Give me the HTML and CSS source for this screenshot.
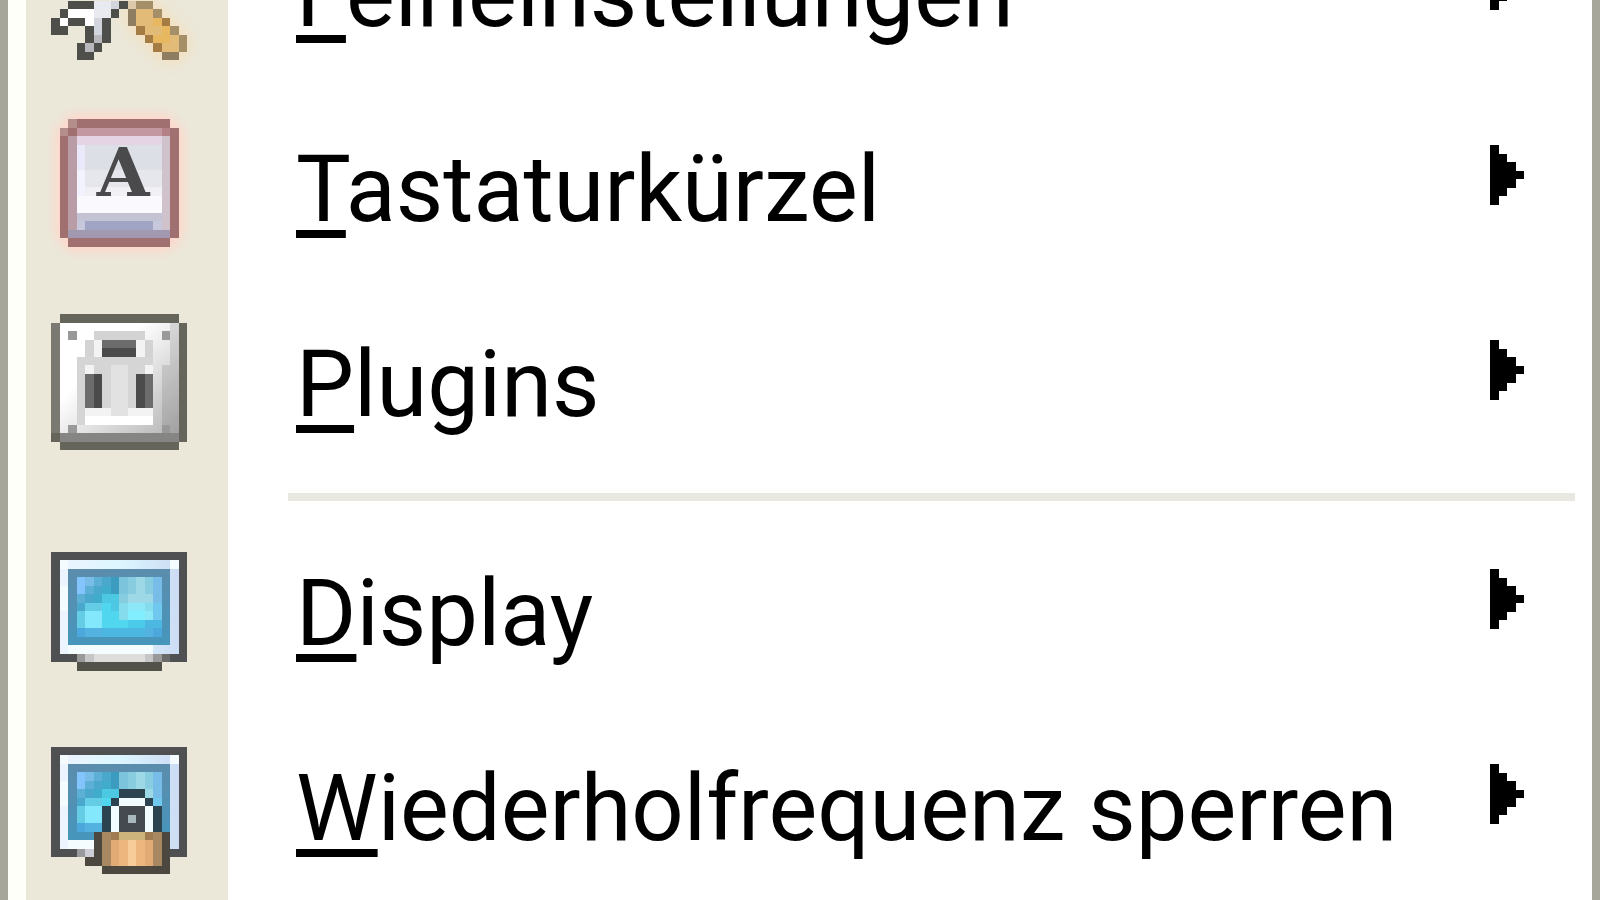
FILE: index.html
```html
<!DOCTYPE html>
<html lang="de">
<head>
  <meta charset="UTF-8">
  <meta name="viewport" content="width=device-width, initial-scale=1.0">
  <title>Menü</title>
  <link rel="stylesheet" href="styles.css">
</head>
<body>
  <!-- shared drawings -->
  <svg class="defs" width="0" height="0" aria-hidden="true">
    <defs>
      <linearGradient id="plate" x1="0" y1="0" x2="1" y2="1">
        <stop offset="0.35" stop-color="#fff"/>
        <stop offset="1" stop-color="#b4b4b4"/>
      </linearGradient>
      <linearGradient id="bezel" x1="0" y1="0" x2="1" y2="0">
        <stop offset="0" stop-color="#eef4ff"/>
        <stop offset="0.5" stop-color="#dcf6ff"/>
        <stop offset="1" stop-color="#ccdcf4"/>
      </linearGradient>
      <linearGradient id="rim" x1="0" y1="0" x2="0" y2="1">
        <stop offset="0" stop-color="#5c8cac"/>
        <stop offset="1" stop-color="#4696bc"/>
      </linearGradient>
    </defs>
    <symbol id="arrow" viewBox="0 0 4 7">
      <path d="M0 0h1v1h1v1h1v1h1v1h-1v1h-1v1h-1v1h-1z"/>
    </symbol>
    <symbol id="monitor" viewBox="0 0 16 16">
      <path fill="#4e5052" d="M0 1h16v13h-16z"/>
      <path fill="url(#bezel)" d="M1 2h14v11h-14z"/>
      <path fill="#f4fcff" d="M1 2h1v1h-1zM14 2h1v1h-1zM1 5h1v3h-1zM2 12h10v1h-10z"/>
      <path fill="url(#rim)" d="M2 3h12v9h-12z"/>
      <path fill="#48b8dc" d="M3 4h10v7h-10z"/>
      <path stroke="#84c4fc" d="M3 4.5h1M3 5.5h1"/>
      <path stroke="#78bce8" d="M4 4.5h1M12 4.5h1M12 5.5h1M12 6.5h1"/>
      <path stroke="#5cb0d6" d="M5 4.5h1M4 5.5h1M3 6.5h1"/>
      <path stroke="#4aa8cc" d="M6 4.5h1M5 5.5h1M4 6.5h1M3 7.5h2"/>
      <path stroke="#3c9cc0" d="M7 4.5h1M7 5.5h1"/>
      <path stroke="#40accc" d="M6 5.5h1M5 6.5h1"/>
      <path stroke="#7cc4dc" d="M8 4.5h1M8 5.5h1"/>
      <path stroke="#88cce0" d="M9 4.5h1M11 4.5h1M9 5.5h1M11 5.5h1M8 6.5h1"/>
      <path stroke="#9cd8e6" d="M10 4.5h1M10 5.5h1M9 6.5h3"/>
      <path stroke="#84dcec" d="M8 7.5h1M11 7.5h1M8 8.5h1"/>
      <path stroke="#8ce8f6" d="M9 7.5h2M11 8.5h1"/>
      <path stroke="#80eefe" d="M9 8.5h2"/>
      <path stroke="#70c8ee" d="M12 7.5h1M12 8.5h1"/>
      <path stroke="#4cc8e2" d="M6 6.5h2M5 7.5h1M7 7.5h1"/>
      <path stroke="#64cce4" d="M4 7.5h2M3 8.5h1M3 9.5h1"/>
      <path stroke="#84e8fc" d="M4 8.5h2M4 9.5h2"/>
      <path stroke="#50d6ee" d="M6 7.5h1M6 8.5h2M6 9.5h3"/>
      <path stroke="#4ccaea" d="M9 9.5h2"/>
      <path stroke="#4cb8e2" d="M11 9.5h2M6 10.5h5"/>
      <path stroke="#4ca8dc" d="M3 10.5h1M12 10.5h1"/>
      <path stroke="#54b2e0" d="M4 10.5h2M11 10.5h1"/>
    </symbol>
  </svg>

  <ul class="menu" role="menu">
    <li role="none">
      <button class="item" type="button" role="menuitem" aria-haspopup="true">
        <svg class="icon" viewBox="0 0 16 16" aria-hidden="true">
          <g class="glow-tan">
            <path stroke="#dcc9ac" d="M9 9.5h1"/>
            <path stroke="#a48f69" d="M10 9.5h2M12 10.5h1M14 12.5h1M15 13.5h1M15 14.5h1"/>
            <path stroke="#8e7d60" d="M9 10.5h1M9 11.5h1M13 15.5h2"/>
            <path stroke="#e2bb78" d="M10 10.5h2M10 11.5h2M11 12.5h2M14 13.5h1M13 14.5h2"/>
            <path stroke="#e8b860" d="M12 11.5h1M13 12.5h1M12 13.5h2"/>
            <path stroke="#a47c44" d="M13 11.5h1M10 12.5h1M11 13.5h1M12 14.5h1"/>
          </g>
          <path stroke="#4e4e4a" d="M2 9.5h3M8 9.5h1M1 10.5h1M7 10.5h1M0 11.5h1M2 11.5h2M6 11.5h1M0 12.5h2M4 12.5h1M6 12.5h1M4 13.5h1M6 13.5h1M3 14.5h1M5 14.5h1M3 15.5h2"/>
          <path stroke="#fff" d="M2 10.5h3M1 11.5h1M4 11.5h1"/>
          <path stroke="#e8eaf0" d="M5 9.5h2M5 10.5h2"/>
          <path stroke="#d2d5dc" d="M7 9.5h1M5 11.5h1M5 12.5h1"/>
          <path stroke="#b8b8bc" d="M5 13.5h1M4 14.5h1"/>
        </svg>
        <span class="label"><u>F</u>eineinstellungen</span>
        <svg class="arrow" aria-hidden="true"><use href="#arrow"/></svg>
      </button>
    </li>
    <li role="none">
      <button class="item" type="button" role="menuitem" aria-haspopup="true">
        <svg class="icon glow-red" viewBox="0 0 16 16" aria-hidden="true">
          <path fill="#a07070" d="M2 0h12v1h1v13h-1v1h-12v-1h-1v-13h1z"/>
          <path stroke="#b48e8a" d="M2 .5h1M1 1.5h1"/>
          <path stroke="#c498a0" d="M3 1.5h10"/>
          <path stroke="#b48088" d="M13 1.5h1"/>
          <path fill="#b89ca6" d="M2 2h1v11h-1z"/>
          <path fill="#d0c2ca" d="M13 2h1v11h-1z"/>
          <path stroke="#a099b0" d="M2 13.5h12"/>
          <path stroke="#e4d4e4" d="M3 2.5h10"/>
          <path fill="#dcdfe6" d="M3 3h10v3h-10z"/>
          <path fill="#e6e7ec" d="M3 6h10v2h-10z"/>
          <path fill="#f0f0f5" d="M3 8h10v1h-10z"/>
          <path fill="#f9f9fe" d="M3 9h10v2h-10z"/>
          <path fill="#e9e9f9" d="M3 3h1v3h-1z"/>
          <path fill="#f3f3ff" d="M3 6h1v3h-1z"/>
          <path stroke="#c3c3d3" d="M3 11.5h10"/>
          <path stroke="#a0a5c4" d="M4 12.5h8"/>
          <path stroke="#c8c8dc" d="M3 12.5h1M12 12.5h1"/>
          <text class="key" x="8.5" y="9" text-anchor="middle">A</text>
        </svg>
        <span class="label"><u>T</u>astaturkürzel</span>
        <svg class="arrow" aria-hidden="true"><use href="#arrow"/></svg>
      </button>
    </li>
    <li role="none">
      <button class="item" type="button" role="menuitem" aria-haspopup="true">
        <svg class="icon" viewBox="0 0 16 16" aria-hidden="true">
          <path fill="#66655c" d="M1 0h14v1h1v14h-1v1h-14v-1h-1v-14h1z"/>
          <path fill="#7a7972" d="M0 1h1v13h-1z"/>
          <path fill="url(#plate)" d="M1 1h14v13h-14z"/>
          <path fill="#000" fill-opacity=".1" d="M14 1h1v13h-1zM13 6h1v8h-1z"/>
          <path stroke="#858583" d="M1 14.5h14"/>
          <path stroke="#999" d="M2 2.5h1M13 2.5h1M2 13.5h1M13 13.5h1"/>
          <path stroke="#d3d3d3" d="M5 2.5h6M4 3.5h1M11 3.5h1M4 4.5h1M11 4.5h1"/>
          <path fill="#d5d5d5" d="M3 5h9v7h-8v1h-1z"/>
          <path stroke="#f3f3f3" d="M5 3.5h1M10 3.5h1M5 4.5h1M10 4.5h1M4 6.5h1M11 6.5h1M4 11.5h3M9 11.5h3"/>
          <path fill="#e2e2e2" d="M7 6h2v6h-2z"/>
          <path stroke="#fff" d="M4 12.5h8"/>
          <path fill="#6c6c6c" d="M6 3h4v1h-4zM4 7h1v4h-1zM11 7h1v4h-1z"/>
          <path fill="#4b4b4b" d="M6 4h4v1h-4zM5 7h1v4h-1zM10 7h1v4h-1z"/>
        </svg>
        <span class="label"><u>P</u>lugins</span>
        <svg class="arrow" aria-hidden="true"><use href="#arrow"/></svg>
      </button>
    </li>
    <li class="separator" role="separator"></li>
    <li role="none">
      <button class="item" type="button" role="menuitem" aria-haspopup="true">
        <svg class="icon" viewBox="0 0 16 16" aria-hidden="true">
          <use href="#monitor"/>
          <path stroke="#999" d="M3 13.5h1M12 13.5h1"/>
          <path stroke="#c6c6c6" d="M4 13.5h1M11 13.5h1"/>
          <path stroke="#dedddc" d="M5 13.5h6"/>
          <path stroke="#6a6a6a" d="M13 13.5h1"/>
          <path stroke="#52514a" d="M3 14.5h10"/>
        </svg>
        <span class="label"><u>D</u>isplay</span>
        <svg class="arrow" aria-hidden="true"><use href="#arrow"/></svg>
      </button>
    </li>
    <li role="none">
      <button class="item" type="button" role="menuitem" aria-haspopup="true">
        <svg class="icon" viewBox="0 0 16 16" aria-hidden="true">
          <use href="#monitor"/>
          <path stroke="#999a9c" d="M3 13.5h1"/>
          <path stroke="#cccdd6" d="M4 13.5h1"/>
          <path fill="#2c4450" d="M8 6h3v1h1v1h1v3h-7v-3h1v-1h1z"/>
          <path fill="#f2fcff" d="M8 7h3v1h1v3h-1v-3h-3v3h-1v-3h1z"/>
          <path fill="#444a50" d="M8 8h3v3h-3z"/>
          <path stroke="#a8b8bc" d="M9 9.5h1"/>
          <path fill="#4c4840" d="M5 11h9v5h-8v-1h-2v-1h1z"/>
          <path fill="#a88860" d="M6 11h7v4h-7z"/>
          <path fill="#e2aa74" d="M7 12h5v3h-5z"/>
          <path fill="#ecb67e" d="M8 12h1v3h-1zM10 12h1v3h-1z"/>
          <path fill="#f8cc98" d="M9 12h1v3h-1z"/>
          <path stroke="#a07a50" d="M7 11.5h1M11 11.5h1"/>
          <path stroke="#ccb47c" d="M8 11.5h3"/>
        </svg>
        <span class="label"><u>W</u>iederholfrequenz sperren</span>
        <svg class="arrow" aria-hidden="true"><use href="#arrow"/></svg>
      </button>
    </li>
  </ul>
</body>
</html>
```

FILE: styles.css
```css
* {
  box-sizing: border-box;
}
html {
  background: #fff;
}
body {
  margin: 0;
  height: 100vh;
  overflow: hidden;
  font-family: Roboto, sans-serif;
  color: #000;
}
.defs {
  position: absolute;
}
/* the list is scrolled: the first entry is cut off at the top */
.menu {
  list-style: none;
  margin: -106px 0 0;
  padding: 0 0 0 18px;
  border-left: 8px solid #a7a69a;
  border-right: 8px solid #a7a69a;
  background: linear-gradient(to right, #fffffa 18px, #ebe8da 18px, #ebe8da 220px, #fff 220px);
}
.item {
  display: grid;
  grid-template-columns: 270px 1fr 34px;
  align-items: center;
  width: 100%;
  height: 195px;
  padding: 0 68px 0 0;
  border: none;
  background: none;
  color: inherit;
  font: inherit;
  text-align: left;
}
.icon {
  width: 136px;
  height: 136px;
  margin-left: 25px;
  overflow: visible;
  shape-rendering: crispEdges;
}
.glow-red {
  filter: drop-shadow(0 0 6px #ffd6ca) drop-shadow(0 0 6px #ffd6ca);
}
.glow-tan {
  filter: drop-shadow(0 0 1px #fbdcae);
}
.key {
  font: bold 8px "DejaVu Serif", serif;
  fill: #4a4a4c;
}
.label {
  padding-top: 6px;
  font-size: 92px;
  line-height: 128px;
  white-space: nowrap;
}
.label u {
  text-decoration-thickness: 8px;
  text-underline-offset: 9px;
  text-decoration-skip-ink: none;
}
.arrow {
  width: 34px;
  height: 60px;
  margin-bottom: 24px;
  shape-rendering: crispEdges;
}
.separator {
  height: 34px;
  padding: 14px 17px 0 262px;
}
.separator::before {
  content: "";
  display: block;
  height: 8px;
  background: #e8e7e0;
}
```
